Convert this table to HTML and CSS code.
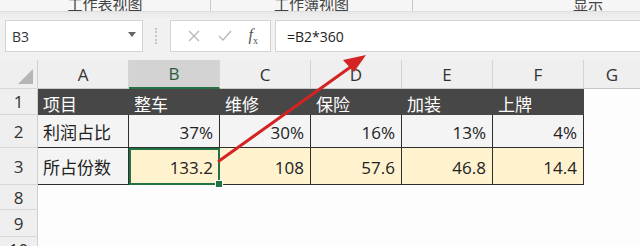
FILE: index.html
```html
<!DOCTYPE html>
<html>
<head>
    <title>工作表</title>
    <link rel="stylesheet" href="styles.css">
</head>
<body>
    <div class="ribbon">
        <div class="group g1">工作表视图</div>
        <div class="group g2">工作簿视图</div>
        <div class="group g3">显示</div>
    </div>

    <div class="formula-bar">
        <div class="name-box">
            <span>B3</span>
            <svg class="caret" width="8" height="5" viewBox="0 0 8 5"><path d="M0 0 L8 0 L4 5 Z" fill="#666"/></svg>
        </div>
        <div class="grip"></div>
        <div class="fx-buttons">
            <svg width="14" height="14" viewBox="0 0 14 14"><path d="M2 2 L12 12 M12 2 L2 12" stroke="#b8b8b8" stroke-width="1.3"/></svg>
            <svg width="16" height="14" viewBox="0 0 16 14"><path d="M2 7 L6 11 L14 2" stroke="#b8b8b8" stroke-width="1.3" fill="none"/></svg>
            <span class="fx"><i>f</i><sub>x</sub></span>
        </div>
        <div class="formula">=B2*360</div>
    </div>

    <div class="sheet">
        <div class="row head">
            <div class="rh corner"><span class="tri"></span></div>
            <div class="ch">A</div>
            <div class="ch sel">B</div>
            <div class="ch">C</div>
            <div class="ch">D</div>
            <div class="ch">E</div>
            <div class="ch">F</div>
            <div class="ch last">G</div>
        </div>
        <div class="row r1">
            <div class="rh">1</div>
            <div class="c dark">项目</div>
            <div class="c dark">整车</div>
            <div class="c dark">维修</div>
            <div class="c dark">保险</div>
            <div class="c dark">加装</div>
            <div class="c dark">上牌</div>
            <div class="c empty"></div>
        </div>
        <div class="row r2">
            <div class="rh">2</div>
            <div class="c grey">利润占比</div>
            <div class="c grey num">37%</div>
            <div class="c grey num">30%</div>
            <div class="c grey num">16%</div>
            <div class="c grey num">13%</div>
            <div class="c grey num">4%</div>
            <div class="c empty"></div>
        </div>
        <div class="row r3">
            <div class="rh">3</div>
            <div class="c grey">所占份数</div>
            <div class="c cream num active">133.2<span class="handle"></span></div>
            <div class="c cream num">108</div>
            <div class="c cream num">57.6</div>
            <div class="c cream num">46.8</div>
            <div class="c cream num">14.4</div>
            <div class="c empty"></div>
        </div>
        <div class="row blank">
            <div class="rh">8</div>
        </div>
        <div class="row blank">
            <div class="rh">9</div>
        </div>
        <div class="row blank">
            <div class="rh">10</div>
        </div>
    </div>

    <!-- annotation arrow from B3 up to the formula text -->
    <svg class="arrow" width="640" height="246" viewBox="0 0 640 246">
        <path d="M219 161 L352 66" stroke="#d42323" stroke-width="3" stroke-linecap="round"/>
        <path d="M366 55 L343 60 L354 72 Z" fill="#d42323"/>
    </svg>
</body>
</html>
```

FILE: styles.css
```css
body {
    margin: 0;
    width: 640px;
    height: 246px;
    overflow: hidden;
    background-color: #fdfdfe;
    font-family: "Open Sans", "Noto Sans CJK SC", sans-serif;
    color: #222;
    position: relative;
}

.ribbon {
    height: 11px;
    display: flex;
    background-color: #f6f6f6;
    border-bottom: 1px solid #dedede;
    overflow: hidden;
}

.group {
    height: 11px;
    display: flex;
    align-items: flex-end;
    justify-content: center;
    font-family: "Noto Sans CJK SC", sans-serif;
    font-size: 15px;
    line-height: 15px;
    color: #444;
}

.g1 {
    width: 210px;
    border-right: 1px solid #c9c9c9;
}

.g2 {
    width: 201px;
    border-right: 1px solid #c9c9c9;
}

.g3 {
    flex: 1;
    justify-content: flex-start;
    padding-left: 160px;
}

.formula-bar {
    height: 48px;
    display: flex;
    align-items: center;
    background: linear-gradient(#e9e9e9, #f1f1f1 8px, #f1f1f1);
    padding-left: 5px;
}

.name-box {
    width: 124px;
    height: 30px;
    background-color: #fff;
    border: 1px solid #d4d4d4;
    display: flex;
    align-items: center;
    justify-content: space-between;
    padding: 0 6px 0 6px;
    font-size: 14px;
    color: #333;
}

.caret {
    margin-top: -4px;
}

.grip {
    width: 0;
    height: 16px;
    margin: 0 13px 0 12px;
    border-left: 2px dotted #c6c6c6;
}

.fx-buttons {
    width: 101px;
    height: 32px;
    background-color: #fff;
    border: 1px solid #d4d4d4;
    display: flex;
    align-items: center;
    justify-content: space-around;
    padding: 0 4px 0 8px;
    box-sizing: border-box;
}

.fx {
    font-family: "Liberation Serif", serif;
    font-size: 16px;
    color: #555;
}

.fx sub {
    font-size: 10px;
}

.formula {
    flex: 1;
    height: 30px;
    margin-left: 4px;
    background-color: #fff;
    border: 1px solid #d4d4d4;
    border-right: none;
    display: flex;
    align-items: center;
    padding-left: 11px;
    font-size: 14px;
    color: #222;
}

.sheet {
    display: flex;
    flex-direction: column;
    height: 186px;
    overflow: hidden;
}

.row {
    display: flex;
    flex: none;
}

.rh {
    width: 38px;
    flex: none;
    box-sizing: border-box;
    background-color: #efefef;
    border-right: 1px solid #d0d0d0;
    border-bottom: 1px solid #d7d7d7;
    display: flex;
    align-items: center;
    justify-content: center;
    font-size: 17px;
    color: #333;
}

.head {
    height: 29px;
}

.corner {
    position: relative;
}

.tri {
    position: absolute;
    right: 4px;
    bottom: 4px;
    width: 0;
    height: 0;
    border-left: 15px solid transparent;
    border-bottom: 15px solid #b5b5b5;
}

.ch {
    width: 91px;
    box-sizing: border-box;
    background-color: #efefef;
    border-right: 1px solid #d4d4d4;
    border-bottom: 1px solid #c8c8c8;
    display: flex;
    align-items: center;
    justify-content: center;
    font-size: 17px;
    color: #333;
}

.ch.sel {
    background-color: #d3d3d3;
    border-bottom: 2px solid #217346;
    color: #2a5a3c;
}

.ch.last {
    flex: 1;
    border-right: none;
}

.r1 {
    height: 26px;
}

.r2 {
    height: 33px;
}

.r3 {
    height: 37px;
}

.blank {
    height: 25px;
}

.blank:nth-child(6) {
    height: 27px;
}

.c {
    width: 91px;
    box-sizing: border-box;
    display: flex;
    align-items: center;
    padding: 0 6px 0 5px;
    font-family: "Noto Sans CJK SC", sans-serif;
    font-size: 17px;
    border-right: 1px solid #2e2e2e;
    border-bottom: 1px solid #2e2e2e;
}

.c.num {
    justify-content: flex-end;
    font-family: "Open Sans", sans-serif;
    padding-top: 3px;
}

.dark {
    background-color: #474747;
    color: #fff;
    border-right-color: #474747;
    border-bottom-color: #474747;
    padding-top: 3px;
}

.grey {
    background-color: #f4f4f4;
}

.cream {
    background-color: #fff2cf;
}

.empty {
    flex: 1;
    border: none;
    background-color: transparent;
}

.active {
    position: relative;
    outline: 2px solid #217346;
    outline-offset: -2px;
}

.handle {
    position: absolute;
    right: -4px;
    bottom: -4px;
    width: 6px;
    height: 6px;
    background-color: #217346;
    border: 1px solid #fff;
}

.arrow {
    position: absolute;
    left: 0;
    top: 0;
    pointer-events: none;
}
```
